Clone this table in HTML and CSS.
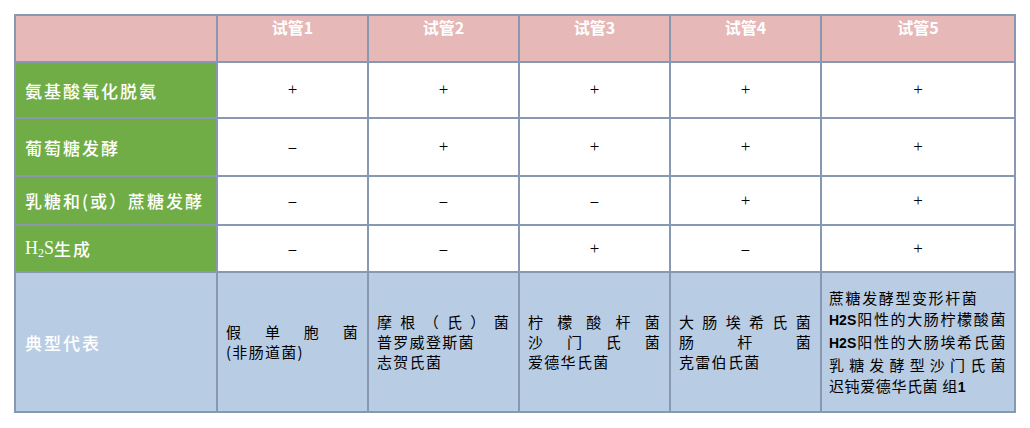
FILE: index.html
```html
<!DOCTYPE html>
<html lang="zh-CN">
<head>
<meta charset="utf-8">
<title>肠杆菌生化反应</title>
<link rel="stylesheet" href="styles.css">
</head>
<body>
<div class="grid">
  <div class="cell head"></div>
  <div class="cell head"><span>试管1</span></div>
  <div class="cell head"><span>试管2</span></div>
  <div class="cell head"><span>试管3</span></div>
  <div class="cell head"><span>试管4</span></div>
  <div class="cell head"><span>试管5</span></div>

  <div class="cell label">氨基酸氧化脱氨</div>
  <div class="cell mark">+</div>
  <div class="cell mark">+</div>
  <div class="cell mark">+</div>
  <div class="cell mark">+</div>
  <div class="cell mark">+</div>

  <div class="cell label">葡萄糖发酵</div>
  <div class="cell mark dash">–</div>
  <div class="cell mark">+</div>
  <div class="cell mark">+</div>
  <div class="cell mark">+</div>
  <div class="cell mark">+</div>

  <div class="cell label">乳糖和(或）蔗糖发酵</div>
  <div class="cell mark dash">–</div>
  <div class="cell mark dash">–</div>
  <div class="cell mark dash">–</div>
  <div class="cell mark">+</div>
  <div class="cell mark">+</div>

  <div class="cell label"><span class="latin">H<sub>2</sub>S</span>生成</div>
  <div class="cell mark dash">–</div>
  <div class="cell mark dash">–</div>
  <div class="cell mark">+</div>
  <div class="cell mark dash">–</div>
  <div class="cell mark">+</div>

  <div class="cell label blue">典型代表</div>
  <div class="cell rep">
    <div class="lines">
      <div class="j">假单胞菌</div>
      <div>(非肠道菌)</div>
    </div>
  </div>
  <div class="cell rep">
    <div class="lines">
      <div class="j">摩根（氏）菌</div>
      <div>普罗威登斯菌</div>
      <div>志贺氏菌</div>
    </div>
  </div>
  <div class="cell rep">
    <div class="lines">
      <div class="j">柠檬酸杆菌</div>
      <div class="j">沙门氏菌</div>
      <div>爱德华氏菌</div>
    </div>
  </div>
  <div class="cell rep">
    <div class="lines">
      <div class="j">大肠埃希氏菌</div>
      <div class="j">肠杆菌</div>
      <div>克雷伯氏菌</div>
    </div>
  </div>
  <div class="cell rep last">
    <div class="lines">
      <div class="first">蔗糖发酵型变形杆菌</div>
      <div class="j"><span class="latin">H2S</span>阳性的大肠柠檬酸菌</div>
      <div class="j"><span class="latin">H2S</span>阳性的大肠埃希氏菌</div>
      <div class="j">乳糖发酵型沙门氏菌</div>
      <div>迟钝爱德华氏菌 组<span class="latin">1</span></div>
    </div>
  </div>
</div>
</body>
</html>
```

FILE: styles.css
```css
html, body {
  margin: 0;
  padding: 0;
  background: #ffffff;
}

body {
  padding: 14px;
  font-family: "Noto Sans CJK SC", "Liberation Sans", sans-serif;
  color: #000;
}

.grid {
  display: grid;
  grid-template-columns: 202px 151px 151px 151px 151px 194px;
  grid-template-rows: 47px 56px 58px 49px 47px 140px;
  width: max-content;
  border-left: 2px solid #8898b2;
  border-top: 2px solid #8898b2;
}

.cell {
  box-sizing: border-box;
  border-right: 2px solid #8898b2;
  border-bottom: 2px solid #8898b2;
  background: #ffffff;
  display: flex;
  align-items: center;
  min-width: 0;
}

.head {
  background: #e6b8b7;
  color: #ffffff;
  font-weight: 700;
  font-size: 16px;
  line-height: 22px;
  align-items: flex-start;
  justify-content: center;
  padding-top: 0;
}

.label {
  background: #70ad47;
  color: #ffffff;
  font-size: 17px;
  letter-spacing: 2px;
  font-weight: 500;
  padding-left: 9px;
  white-space: nowrap;
}

.label .latin {
  font-family: "Liberation Serif", serif;
  letter-spacing: 0;
  font-weight: 400;
  font-size: 18px;
}

.label sub {
  font-size: 12px;
  vertical-align: -3px;
  line-height: 0;
}

.label.blue {
  background: #b8cce4;
}

.mark {
  justify-content: center;
  font-family: "Liberation Serif", serif;
  font-weight: 400;
  font-size: 17px;
  color: #000000;
}

.mark.dash {
  font-family: "Liberation Sans", sans-serif;
  font-size: 14px;
}

.rep {
  background: #b8cce4;
  font-size: 15px;
  line-height: 20px;
  letter-spacing: 1.3px;
  padding: 0 8px 0 8px;
}

.lines {
  width: 100%;
}

.j {
  text-align: justify;
  text-align-last: justify;
}

.rep.last {
  font-size: 15px;
  line-height: 21px;
  letter-spacing: 0.6px;
  padding: 0 8px 0 7px;
}

.rep.last .first {
  letter-spacing: 1.6px;
}

.rep .latin {
  font-family: "Liberation Sans", sans-serif;
  font-weight: 700;
  font-size: 14px;
  letter-spacing: 0;
}
```
